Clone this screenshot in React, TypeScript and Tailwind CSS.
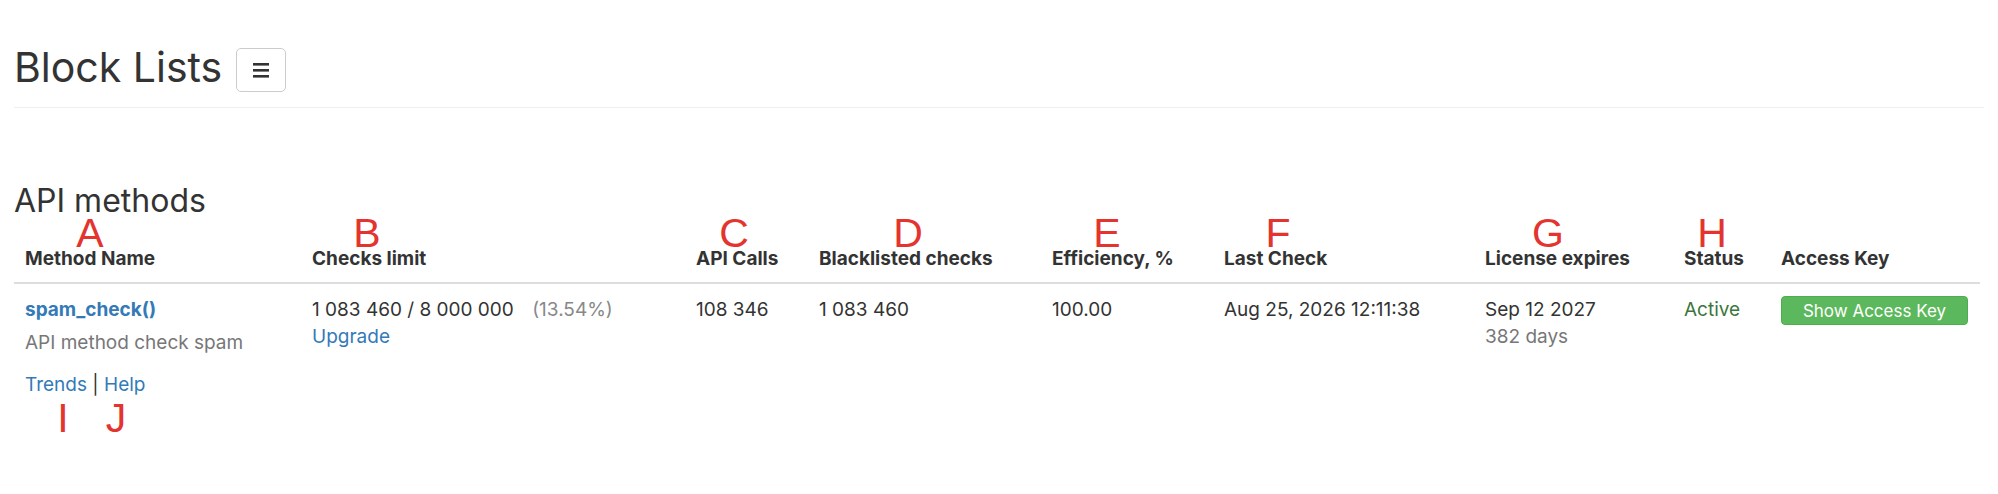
const marks = [
  { ch: "A", x: "left-[90px]", y: "top-[213px]" },
  { ch: "B", x: "left-[367px]", y: "top-[213px]" },
  { ch: "C", x: "left-[734px]", y: "top-[213px]" },
  { ch: "D", x: "left-[908px]", y: "top-[213px]" },
  { ch: "E", x: "left-[1107px]", y: "top-[213px]" },
  { ch: "F", x: "left-[1278px]", y: "top-[213px]" },
  { ch: "G", x: "left-[1548px]", y: "top-[213px]" },
  { ch: "H", x: "left-[1712px]", y: "top-[213px]" },
  { ch: "I", x: "left-[63px]", y: "top-[398px]" },
  { ch: "J", x: "left-[116px]", y: "top-[398px]" },
];

const headers = [
  "Method Name",
  "Checks limit",
  "API Calls",
  "Blacklisted checks",
  "Efficiency, %",
  "Last Check",
  "License expires",
  "Status",
  "Access Key",
];

function MenuIcon() {
  return (
    <svg width="16" height="15" viewBox="0 0 16 15" fill="#333">
      <rect x="0" y="0" width="16" height="2.6" />
      <rect x="0" y="6" width="16" height="2.6" />
      <rect x="0" y="12" width="16" height="2.6" />
    </svg>
  );
}

export default function App() {
  return (
    <div className="relative h-[494px] w-full overflow-hidden bg-white px-[14px] font-['Inter','Liberation_Sans',sans-serif] text-[#333]">
      <div className="flex items-start pt-[47px]">
        <h1 className="text-[41px] leading-[40px] font-normal">Block Lists</h1>
        <button className="ml-[14px] mt-[1px] flex h-[44px] w-[50px] items-center justify-center rounded-[5px] border border-[#ccc] bg-white">
          <MenuIcon />
        </button>
      </div>
      <div className="mt-[15px] border-t border-[#eee]" />

      <h3 className="mt-[77px] text-[32px] leading-[32px] font-normal">API methods</h3>

      <table className="mt-[18px] w-[1966px] table-fixed border-collapse text-[19px] leading-[27px]">
        <colgroup>
          <col className="w-[287px]" />
          <col className="w-[384px]" />
          <col className="w-[123px]" />
          <col className="w-[233px]" />
          <col className="w-[172px]" />
          <col className="w-[261px]" />
          <col className="w-[199px]" />
          <col className="w-[97px]" />
          <col className="w-[210px]" />
        </colgroup>
        <thead>
          <tr className="border-b-2 border-[#ddd]">
            {headers.map((h) => (
              <th key={h} className="px-[11px] pt-[10px] pb-[10px] text-left font-bold whitespace-nowrap">
                {h}
              </th>
            ))}
          </tr>
        </thead>
        <tbody>
          <tr className="align-top">
            <td className="px-[11px] pt-[12px]">
              <a className="font-bold text-[#337ab7]">spam_check()</a>
              <div className="mt-[6px] text-[#777]">API method check spam</div>
              <div className="mt-[15px]">
                <a className="text-[#337ab7]">Trends</a> | <a className="text-[#337ab7]">Help</a>
              </div>
            </td>
            <td className="px-[11px] pt-[12px] whitespace-nowrap">
              1 083 460 / 8 000 000 <span className="ml-[13px] text-[#888]">(13.54%)</span>
              <div>
                <a className="text-[#337ab7]">Upgrade</a>
              </div>
            </td>
            <td className="px-[11px] pt-[12px] whitespace-nowrap">108 346</td>
            <td className="px-[11px] pt-[12px] whitespace-nowrap">1 083 460</td>
            <td className="px-[11px] pt-[12px] whitespace-nowrap">100.00</td>
            <td className="px-[11px] pt-[12px] whitespace-nowrap">Aug 25, 2026 12:11:38</td>
            <td className="px-[11px] pt-[12px] whitespace-nowrap">
              Sep 12 2027
              <div className="text-[#777]">382 days</div>
            </td>
            <td className="px-[11px] pt-[12px] text-[#3c763d]">Active</td>
            <td className="px-[11px] pt-[12px]">
              <button className="h-[29px] w-[187px] rounded-[4px] border border-[#4cae4c] bg-[#5cb85c] text-[17px] leading-[20px] text-white">
                Show Access Key
              </button>
            </td>
          </tr>
        </tbody>
      </table>

      {marks.map((m) => (
        <span
          key={m.ch}
          className={`absolute ${m.x} ${m.y} -translate-x-1/2 font-['Liberation_Sans',Arial,sans-serif] text-[41px] leading-[41px] text-[#e3342f]`}
        >
          {m.ch}
        </span>
      ))}
    </div>
  );
}
